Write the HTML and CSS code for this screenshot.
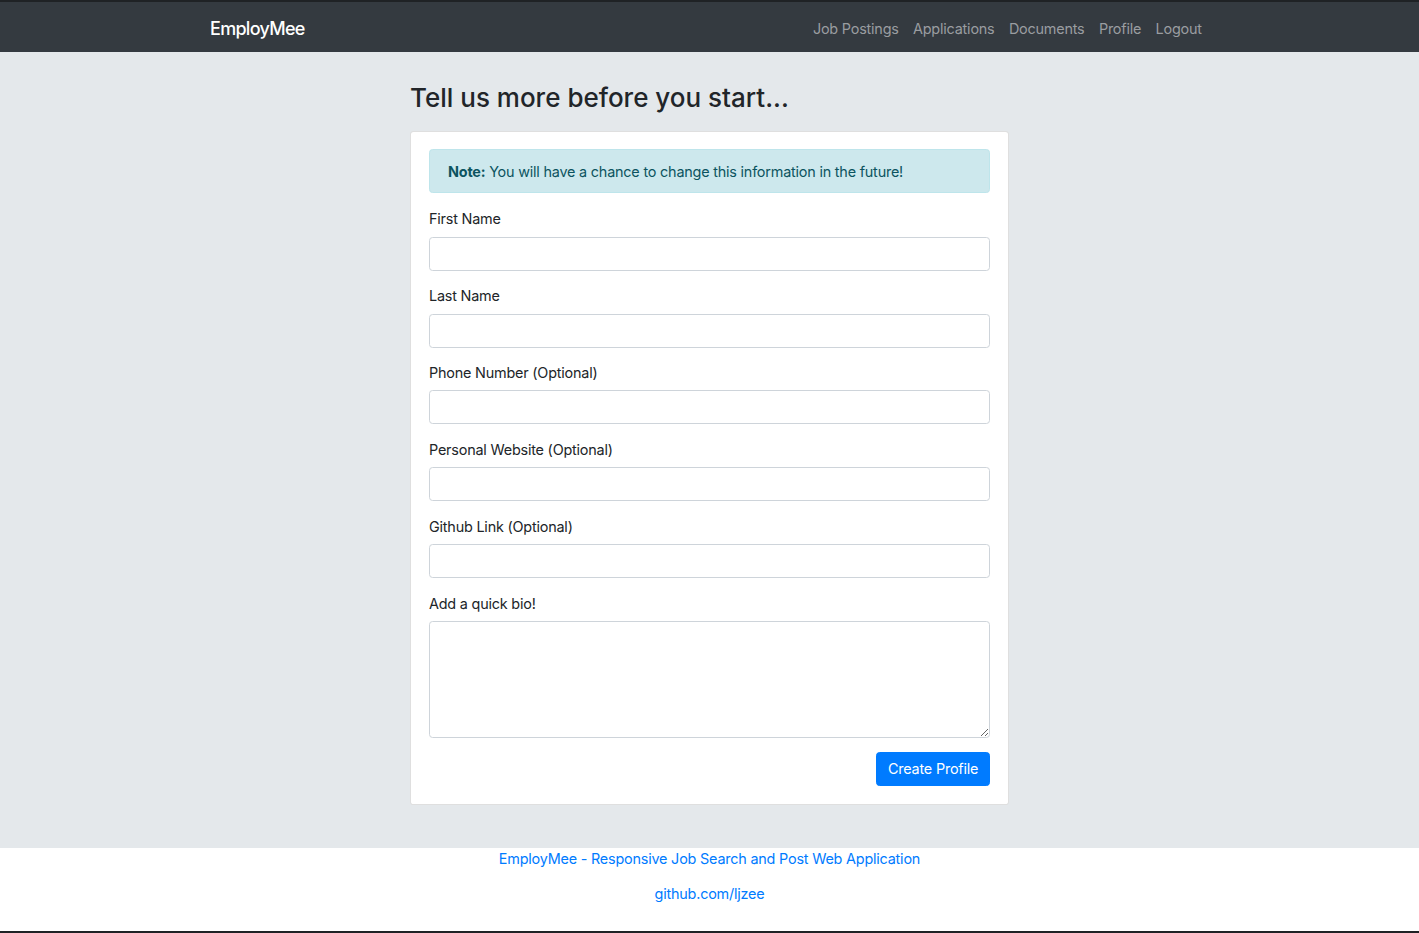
FILE: index.html
```html
<!DOCTYPE html>
<html lang="en">
<head>
<meta charset="utf-8">
<title>EmployMee</title>
<link rel="stylesheet" href="styles.css">
</head>
<body>
<div class="frame-top"></div>
<nav class="navbar">
  <div class="container nav-inner">
    <a class="brand" href="#">EmployMee</a>
    <ul class="nav-links">
      <li><a href="#">Job Postings</a></li>
      <li><a href="#">Applications</a></li>
      <li><a href="#">Documents</a></li>
      <li><a href="#">Profile</a></li>
      <li><a href="#">Logout</a></li>
    </ul>
  </div>
</nav>
<main class="main">
  <div class="col">
    <h3 class="title">Tell us more before you start...</h3>
    <div class="card">
      <div class="card-body">
        <div class="alert"><strong>Note:</strong> You will have a chance to change this information in the future!</div>
        <form>
          <div class="form-group">
            <label>First Name</label>
            <input class="form-control" type="text">
          </div>
          <div class="form-group">
            <label>Last Name</label>
            <input class="form-control" type="text">
          </div>
          <div class="form-group">
            <label>Phone Number (Optional)</label>
            <input class="form-control" type="text">
          </div>
          <div class="form-group">
            <label>Personal Website (Optional)</label>
            <input class="form-control" type="text">
          </div>
          <div class="form-group">
            <label>Github Link (Optional)</label>
            <input class="form-control" type="text">
          </div>
          <div class="form-group">
            <label>Add a quick bio!</label>
            <textarea class="form-control bio"></textarea>
          </div>
          <div class="actions">
            <button class="btn" type="button">Create Profile</button>
          </div>
        </form>
      </div>
    </div>
  </div>
</main>
<footer class="footer">
  <p><a href="#">EmployMee - Responsive Job Search and Post Web Application</a></p>
  <p><a href="#">github.com/ljzee</a></p>
</footer>
</body>
</html>
```

FILE: styles.css
```css
* { box-sizing: border-box; }
html, body { margin: 0; padding: 0; }
body {
  font-family: Inter, "Noto Sans", "Liberation Sans", sans-serif;
  font-size: 14.4px;
  line-height: 21.6px;
  color: #212529;
  background: #fff;
  height: 933px;
  display: flex;
  flex-direction: column;
  letter-spacing: -0.2px;
}
a { text-decoration: none; }
.frame-top { height: 2px; background: #1f2225; }
.navbar { background: #343a40; height: 50.4px; }
.container { width: 1026px; margin: 0 auto; padding: 0 13.5px; }
.nav-inner { display: flex; align-items: center; justify-content: space-between; height: 100%; padding-top: 3px; }
.brand { color: #fff; font-size: 18px; font-weight: 500; line-height: 27px; letter-spacing: -0.7px; }
.nav-links { list-style: none; margin: 0; padding: 0; display: flex; }
.nav-links a { display: block; padding: 7.2px 7.2px; color: #9a9da0; }
.main {
  background: #e4e8eb;
  padding: 30px 0 42.5px;
  display: flex;
  justify-content: center;
}
.col { width: 599px; }
.title { margin: 0 0 18px; font-size: 26px; line-height: 31px; font-weight: 500; letter-spacing: 0; }
.card { background: #fff; border: 1px solid rgba(0,0,0,.125); border-radius: 3.6px; }
.card-body { padding: 17px 18px 18px; }
.alert {
  background: #cde8ed;
  border: 1px solid #bee5eb;
  color: #0c5460;
  border-radius: 3.6px;
  padding: 10.2px 18px;
  margin-bottom: 14.4px;
}
.alert strong { font-weight: 700; }
.form-group { margin-bottom: 14.2px; display: flex; flex-direction: column; }
label { margin-bottom: 7.2px; }
.form-control {
  display: block;
  width: 100%;
  height: 34px;
  border: 1px solid #ced4da;
  border-radius: 3.6px;
  padding: 5.4px 10.8px;
  font: inherit;
  background: #fff;
}
.bio { height: 116.5px; resize: vertical; }
.actions { display: flex; justify-content: flex-end; }
.btn {
  background: #007bff;
  border: 1px solid #007bff;
  color: #fff;
  font: inherit;
  letter-spacing: -0.2px;
  border-radius: 3.6px;
  height: 34px;
  padding: 0 10.8px;
}
.footer {
  flex: 1;
  text-align: center;
  background: #fff;
  border-bottom: 2px solid #1f2225;
}
.footer p { margin: 0 0 13.4px; }
.footer a { color: #007bff; }
```
